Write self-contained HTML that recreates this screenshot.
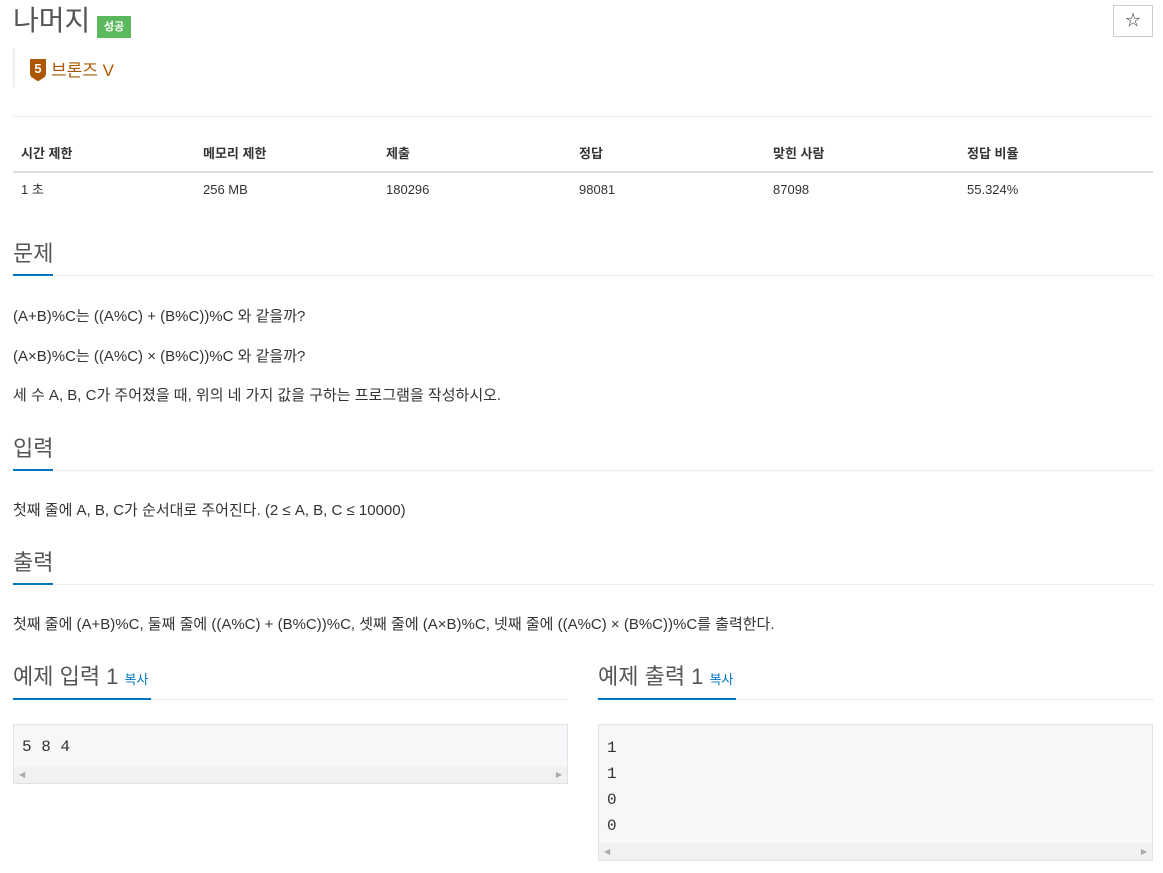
<!DOCTYPE html>
<html><head><meta charset="utf-8">
<style>
*{margin:0;padding:0;box-sizing:border-box}
body{width:1163px;height:873px;background:#fff;font-family:"Liberation Sans","Noto Sans CJK KR",sans-serif;color:#555;position:relative;overflow:hidden}
.a{position:absolute;white-space:nowrap}
h1{position:absolute;left:13px;top:3px;font-size:28px;font-weight:normal;color:#555;line-height:36px;white-space:nowrap}
.badge{left:97px;top:16px;width:34px;height:22px;background:#5cb85c;color:#fff;font-size:11px;font-weight:bold;text-align:center;line-height:22px}
.star{left:1113px;top:5px;width:40px;height:32px;border:1px solid #ccc;text-align:center;line-height:30px;font-size:15px;color:#333}
.th{top:145px;font-size:13px;font-weight:bold;color:#333;line-height:18px}
.td{top:181px;font-size:13px;color:#333;line-height:18px}
.h{font-size:22px;color:#555;line-height:28px}
.ul{position:absolute;height:2px;background:#0076c0}
.dl{position:absolute;height:0;border-top:1px dotted #ddd}
.p{font-size:15px;color:#333;line-height:20px}
.box{position:absolute;background:#f7f7f9;border:1px solid #e1e1e8;font-family:"Liberation Mono",monospace;font-size:16px;color:#333}
.sb{position:absolute;left:0;right:0;bottom:0;height:17px;background:#f1f1f1;font-size:8px;color:#aaa;font-family:"DejaVu Sans",sans-serif;line-height:17px}
</style></head><body>
<h1>나머지</h1>
<div class="a badge">성공</div>
<div class="a star">☆</div>
<div class="a" style="left:13px;top:48px;width:2px;height:39px;background:#eee"></div>
<svg class="a" style="left:30px;top:59px" width="16" height="22" viewBox="0 0 16 22"><path d="M0 0H16V16L8 21L0 16Z" fill="#ad5600"/><path d="M1 17L8 21.5L15 17" stroke="#ad5600" stroke-width="1.5" fill="none"/><text x="8" y="14" font-size="13" font-weight="bold" fill="#fff" text-anchor="middle" font-family="Liberation Sans">5</text></svg>
<div class="a" style="left:51px;top:60px;font-size:17px;color:#ad5600;line-height:22px">브론즈 V</div>
<div class="a" style="left:13px;top:116px;width:1140px;height:1px;background:#eee"></div>
<div class="a th" style="left:21px">시간 제한</div>
<div class="a th" style="left:203px">메모리 제한</div>
<div class="a th" style="left:386px">제출</div>
<div class="a th" style="left:579px">정답</div>
<div class="a th" style="left:773px">맞힌 사람</div>
<div class="a th" style="left:967px">정답 비율</div>
<div class="a" style="left:13px;top:171px;width:1140px;height:2px;background:#ddd"></div>
<div class="a td" style="left:21px">1 초</div>
<div class="a td" style="left:203px">256 MB</div>
<div class="a td" style="left:386px">180296</div>
<div class="a td" style="left:579px">98081</div>
<div class="a td" style="left:773px">87098</div>
<div class="a td" style="left:967px">55.324%</div>

<div class="a h" style="left:13px;top:240px">문제</div>
<div class="dl" style="left:13px;top:275px;width:1140px"></div>
<div class="ul" style="left:13px;top:274px;width:40px"></div>
<div class="a p" style="left:13px;top:307px">(A+B)%C는 ((A%C) + (B%C))%C 와 같을까?</div>
<div class="a p" style="left:13px;top:347px">(A×B)%C는 ((A%C) × (B%C))%C 와 같을까?</div>
<div class="a p" style="left:13px;top:386px">세 수 A, B, C가 주어졌을 때, 위의 네 가지 값을 구하는 프로그램을 작성하시오.</div>

<div class="a h" style="left:13px;top:435px">입력</div>
<div class="dl" style="left:13px;top:470px;width:1140px"></div>
<div class="ul" style="left:13px;top:469px;width:40px"></div>
<div class="a p" style="left:13px;top:501px">첫째 줄에 A, B, C가 순서대로 주어진다. (2 ≤ A, B, C ≤ 10000)</div>

<div class="a h" style="left:13px;top:549px">출력</div>
<div class="dl" style="left:13px;top:584px;width:1140px"></div>
<div class="ul" style="left:13px;top:583px;width:40px"></div>
<div class="a p" style="left:13px;top:615px">첫째 줄에 (A+B)%C, 둘째 줄에 ((A%C) + (B%C))%C, 셋째 줄에 (A×B)%C, 넷째 줄에 ((A%C) × (B%C))%C를 출력한다.</div>

<div class="a h" style="left:13px;top:663px">예제 입력 1 <span style="font-size:13px;color:#0076c0">복사</span></div>
<div class="dl" style="left:13px;top:699px;width:555px"></div>
<div class="ul" style="left:13px;top:698px;width:138px"></div>
<div class="box" style="left:13px;top:724px;width:555px;height:60px"><div style="position:absolute;left:8px;top:12px;line-height:20px">5 8 4</div><div class="sb"><span style="margin-left:5px">◀</span><span style="float:right;margin-right:5px">▶</span></div></div>

<div class="a h" style="left:598px;top:663px">예제 출력 1 <span style="font-size:13px;color:#0076c0">복사</span></div>
<div class="dl" style="left:598px;top:699px;width:555px"></div>
<div class="ul" style="left:598px;top:698px;width:138px"></div>
<div class="box" style="left:598px;top:724px;width:555px;height:137px"><div style="position:absolute;left:8px;top:10px;line-height:26px">1<br>1<br>0<br>0</div><div class="sb"><span style="margin-left:5px">◀</span><span style="float:right;margin-right:5px">▶</span></div></div>
</body></html>
